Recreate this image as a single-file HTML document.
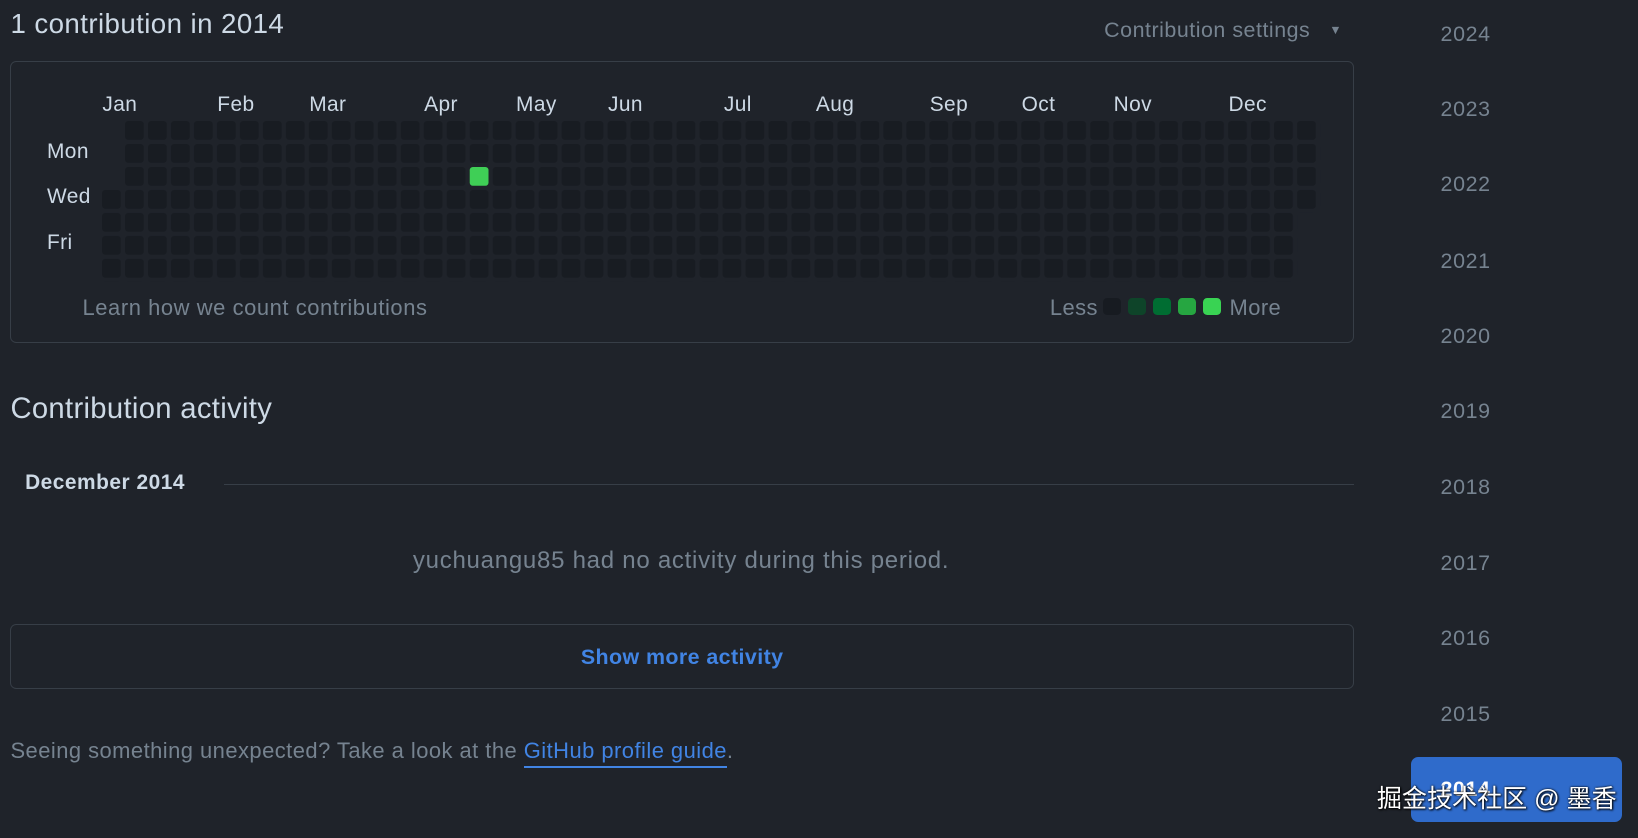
<!DOCTYPE html>
<html><head><meta charset="utf-8"><style>
html,body{margin:0;padding:0;background:#1f232a;}
body{width:1568px;height:802px;zoom:1.04464;position:relative;overflow:hidden;font-family:"Liberation Sans","Noto Sans CJK SC",sans-serif;color:#adbac7;}
.a{position:absolute;white-space:nowrap;line-height:1;}
.m{font-size:20px;letter-spacing:0.4px;color:#cdd9e5;top:91px;}
.d{font-size:20px;letter-spacing:0.4px;color:#cdd9e5;left:45px;}
.y{font-size:20.5px;letter-spacing:0.6px;color:#768390;left:1379px;}
</style></head><body>
<div class="a" style="left:10px;top:10px;font-size:26.5px;letter-spacing:0.4px;color:#cdd9e5;">1 contribution in 2014</div>
<div class="a" style="left:1057px;top:19px;font-size:20.5px;letter-spacing:0.5px;color:#768390;">Contribution settings <span style="font-size:12px;position:relative;top:-3px;margin-left:12px;">&#9660;</span></div>
<div class="a" style="left:10px;top:58px;width:1284px;height:268px;border:1px solid #373e47;border-radius:6px;"></div>
<div class="a m" style="left:98px">Jan</div><div class="a m" style="left:208px">Feb</div><div class="a m" style="left:296px">Mar</div><div class="a m" style="left:406px">Apr</div><div class="a m" style="left:494px">May</div><div class="a m" style="left:582px">Jun</div><div class="a m" style="left:693px">Jul</div><div class="a m" style="left:781px">Aug</div><div class="a m" style="left:890px">Sep</div><div class="a m" style="left:978px">Oct</div><div class="a m" style="left:1066px">Nov</div><div class="a m" style="left:1176px">Dec</div>
<div class="a d" style="top:136px">Mon</div><div class="a d" style="top:179px">Wed</div><div class="a d" style="top:223px">Fri</div>
<svg class="a" style="left:98px;top:116px" width="1170" height="160">
<defs><pattern id="p" width="22" height="22" patternUnits="userSpaceOnUse"><rect x="0" y="0" width="18" height="18" rx="3" fill="#181c22"/></pattern></defs>
<rect x="22" y="0" width="1122" height="154" fill="url(#p)"/>
<rect x="0" y="66" width="22" height="88" fill="url(#p)"/>
<rect x="1144" y="0" width="22" height="88" fill="url(#p)"/>
<rect x="352" y="44" width="18" height="18" rx="3" fill="#3fcf56"/>
</svg>
<div class="a" style="left:79px;top:284px;font-size:21px;letter-spacing:0.55px;color:#768390;">Learn how we count contributions</div>
<div class="a" style="left:1005px;top:284px;font-size:21px;letter-spacing:0.4px;color:#768390;">Less</div>
<div class="a" style="left:1056px;top:285px;width:17px;height:17px;border-radius:4px;background:#171b21"></div>
<div class="a" style="left:1080px;top:285px;width:17px;height:17px;border-radius:4px;background:#0e4429"></div>
<div class="a" style="left:1104px;top:285px;width:17px;height:17px;border-radius:4px;background:#006d32"></div>
<div class="a" style="left:1128px;top:285px;width:17px;height:17px;border-radius:4px;background:#26a641"></div>
<div class="a" style="left:1152px;top:285px;width:17px;height:17px;border-radius:4px;background:#39d353"></div>
<div class="a" style="left:1177px;top:284px;font-size:21px;letter-spacing:0.4px;color:#768390;">More</div>
<div class="a" style="left:10px;top:378px;font-size:28px;letter-spacing:0.3px;color:#cdd9e5;">Contribution activity</div>
<div class="a" style="left:24px;top:453px;font-size:20px;letter-spacing:0.5px;font-weight:bold;color:#cdd9e5;">December 2014</div>
<div class="a" style="left:214px;top:463px;width:1082px;height:1px;background:#373e47"></div>
<div class="a" style="left:0;width:1304px;text-align:center;top:526px;font-size:23px;letter-spacing:0.7px;color:#768390;">yuchuangu85 had no activity during this period.</div>
<div class="a" style="left:10px;top:597px;width:1284px;height:61px;border:1px solid #373e47;border-radius:6px;"></div>
<div class="a" style="left:10px;width:1286px;text-align:center;top:619px;font-size:20.5px;letter-spacing:0.4px;font-weight:bold;color:#4184e4;">Show more activity</div>
<div class="a" style="left:10px;top:708px;font-size:21px;letter-spacing:0.45px;color:#768390;">Seeing something unexpected? Take a look at the <span style="color:#4184e4;border-bottom:2px solid #4184e4;padding-bottom:3px;">GitHub profile guide</span>.</div>
<div class="a y" style="top:23px">2024</div><div class="a y" style="top:95px">2023</div><div class="a y" style="top:167px">2022</div><div class="a y" style="top:240px">2021</div><div class="a y" style="top:312px">2020</div><div class="a y" style="top:384px">2019</div><div class="a y" style="top:457px">2018</div><div class="a y" style="top:529px">2017</div><div class="a y" style="top:601px">2016</div><div class="a y" style="top:674px">2015</div>
<div class="a" style="left:1351px;top:725px;width:202px;height:62px;border-radius:7px;background:#2f6bcb;"></div>
<div class="a" style="left:1379px;top:746px;font-size:20.5px;letter-spacing:0.5px;color:#fff;font-weight:bold;">2014</div>
<div class="a" style="left:1318px;top:753px;font-size:24px;color:#fff;text-shadow:0 0 2px #000,1px 1px 2px #000;">掘金技术社区 @ 墨香</div>
</body></html>
